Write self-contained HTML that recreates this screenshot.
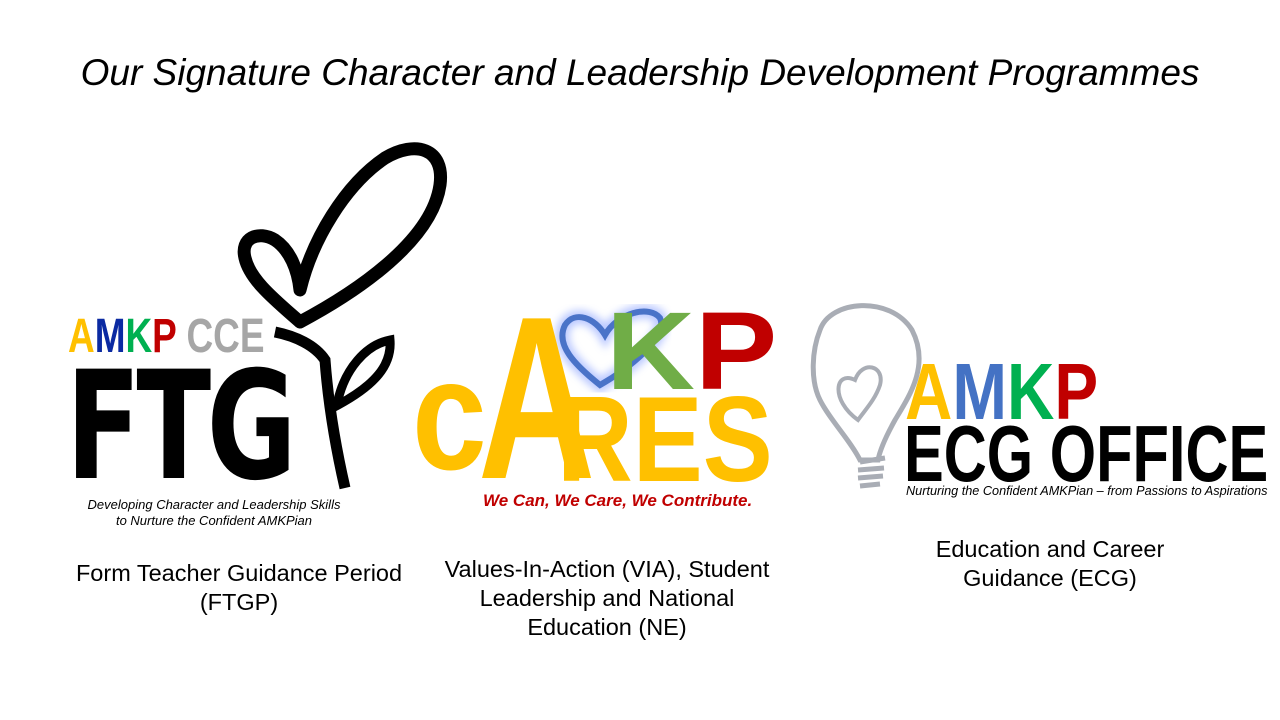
<!DOCTYPE html>
<html><head><meta charset="utf-8"><style>
body{margin:0;width:1280px;height:720px;background:#fff;position:relative;overflow:hidden;font-family:"Liberation Sans",sans-serif}
.a{position:absolute;white-space:nowrap;line-height:1}
.cap{position:absolute;text-align:center;font-size:23.5px;line-height:29px;color:#000}
</style></head><body>
<div class="a" style="left:0;width:1280px;top:54px;text-align:center;font-size:37px;font-style:italic">Our Signature Character and Leadership Development Programmes</div>

<svg class="a" style="left:0;top:0" width="1280" height="720">
<defs><filter id="g"><feGaussianBlur stdDeviation="4"/></filter></defs>
<path d="M300,322 C275,300 250,280 245,258 C240,238 258,230 275,240 C290,250 298,270 300,290 C312,240 345,185 385,158 C415,140 445,148 440,185 C432,240 360,290 300,322 Z" fill="none" stroke="#000" stroke-width="13" stroke-linejoin="round"/>
<path d="M275,332 C295,336 315,345 325,360 C328,400 334,440 345,488" fill="none" stroke="#000" stroke-width="11"/>
<path d="M338,400 C345,370 365,345 390,340 C392,365 375,385 338,405 Z" fill="none" stroke="#000" stroke-width="9"/>
<path d="M820,330 C830,300 890,295 912,330 C930,365 910,395 895,420 C885,438 880,450 878,460 L860,460 C850,440 830,420 820,400 C810,380 812,350 820,330 Z" fill="none" stroke="#a9adb5" stroke-width="5"/>
<path d="M858,420 C830,400 835,370 855,380 C862,360 885,365 880,385 C875,400 865,410 858,420 Z" fill="none" stroke="#a9adb5" stroke-width="4"/>
<path d="M860,462 L885,458 M858,470 L884,468 M858,478 L883,476 M860,486 L880,484" stroke="#a9adb5" stroke-width="5"/>
<path d="M600,385 C575,365 555,345 565,325 C575,310 595,318 605,335 C618,312 650,305 660,318 C668,335 635,365 600,385 Z" fill="none" stroke="#8fa6ff" stroke-width="14" opacity=".6" filter="url(#g)"/>
<path d="M600,385 C575,365 555,345 565,325 C575,310 595,318 605,335 C618,312 650,305 660,318 C668,335 635,365 600,385 Z" fill="none" stroke="#4a73c8" stroke-width="6"/>
</svg>
<div class="a" style="left:68px;top:313px;font-size:48px;font-weight:bold;transform:scaleX(.77);transform-origin:0 0"><span style="color:#ffc000">A</span><span style="color:#0b2aa2">M</span><span style="color:#00b050">K</span><span style="color:#c00000">P</span> <span style="color:#a6a6a6">CCE</span></div>
<div class="a" style="left:66px;top:352px;font-size:150px;font-weight:900;font-family:'DejaVu Sans';transform:scaleX(.73);transform-origin:0 0;letter-spacing:-6px">FTG</div>
<div class="a" style="left:73px;top:497px;font-size:13px;font-style:italic;line-height:16px;text-align:center;width:282px">Developing Character and Leadership Skills<br>to Nurture the Confident AMKPian</div>

<div class="a" style="left:478px;top:283px;font-size:232px;font-weight:bold;color:#ffc000;transform:scaleX(.7);transform-origin:0 0">A</div>
<div class="a" style="left:606px;top:297px;font-size:110px;font-weight:bold;transform:scaleX(1.12);transform-origin:0 0"><span style="color:#70ad47">K</span><span style="color:#c00000">P</span></div>
<div class="a" style="left:412px;top:336px;font-size:158px;font-weight:bold;color:#ffc000;transform:scaleX(.85);transform-origin:0 0">c</div>
<div class="a" style="left:557px;top:378px;font-size:122px;font-weight:bold;color:#ffc000;transform:scaleX(.86);transform-origin:0 0">RES</div>
<div class="a" style="left:483px;top:492px;font-size:17px;font-weight:bold;color:#c00000;font-style:italic">We Can, We Care, We Contribute.</div>

<div class="a" style="left:905px;top:352px;font-size:80px;font-weight:bold;transform:scaleX(.82);transform-origin:0 0"><span style="color:#ffc000">A</span><span style="color:#4472c4">M</span><span style="color:#00b050">K</span><span style="color:#c00000">P</span></div>
<div class="a" style="left:904px;top:414px;font-size:80px;font-weight:bold;transform:scaleX(.745);transform-origin:0 0">ECG OFFICE</div>
<div class="a" style="left:906px;top:485px;font-size:12.7px;font-style:italic">Nurturing the Confident AMKPian – from Passions to Aspirations</div>

<div class="cap" style="left:40px;width:398px;top:559px">Form Teacher Guidance Period<br>(FTGP)</div>
<div class="cap" style="left:407px;width:400px;top:555px">Values-In-Action (VIA), Student<br>Leadership and National<br>Education (NE)</div>
<div class="cap" style="left:880px;width:340px;top:535px">Education and Career<br>Guidance (ECG)</div>
</body></html>
